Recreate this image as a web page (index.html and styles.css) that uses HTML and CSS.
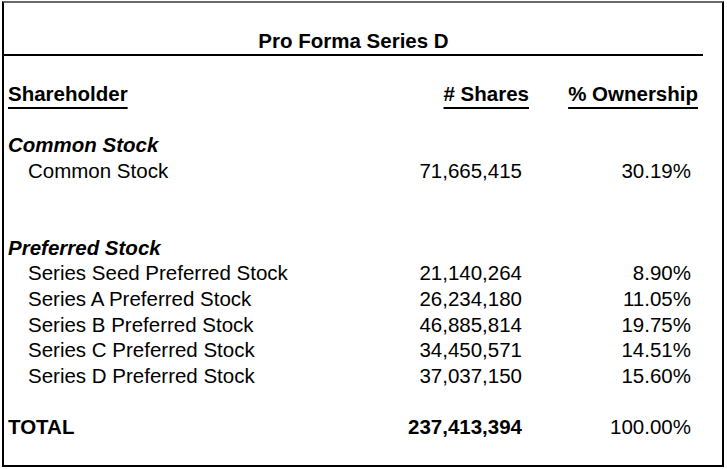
FILE: index.html
```html
<!DOCTYPE html>
<html lang="en">
<head>
<meta charset="utf-8">
<title>Pro Forma Series D</title>
<link rel="stylesheet" href="styles.css">
</head>
<body>
<div class="sheet">
  <div class="row"></div>
  <div class="row"><div class="title">Pro Forma Series D</div></div>
  <div class="row"></div>
  <div class="row head">
    <div class="c-name"><span class="ul">Shareholder</span></div>
    <div class="c-num"><span class="ul"># Shares</span></div>
    <div class="c-pct"><span class="ul">% Ownership</span></div>
  </div>
  <div class="row"></div>
  <div class="row"><div class="c-name group">Common Stock</div></div>
  <div class="row val">
    <div class="c-name sub">Common Stock</div>
    <div class="c-num">71,665,415</div>
    <div class="c-pct">30.19%</div>
  </div>
  <div class="row"></div>
  <div class="row"></div>
  <div class="row"><div class="c-name group">Preferred Stock</div></div>
  <div class="row val">
    <div class="c-name sub">Series Seed Preferred Stock</div>
    <div class="c-num">21,140,264</div>
    <div class="c-pct">8.90%</div>
  </div>
  <div class="row val">
    <div class="c-name sub">Series A Preferred Stock</div>
    <div class="c-num">26,234,180</div>
    <div class="c-pct">11.05%</div>
  </div>
  <div class="row val">
    <div class="c-name sub">Series B Preferred Stock</div>
    <div class="c-num">46,885,814</div>
    <div class="c-pct">19.75%</div>
  </div>
  <div class="row val">
    <div class="c-name sub">Series C Preferred Stock</div>
    <div class="c-num">34,450,571</div>
    <div class="c-pct">14.51%</div>
  </div>
  <div class="row val">
    <div class="c-name sub">Series D Preferred Stock</div>
    <div class="c-num">37,037,150</div>
    <div class="c-pct">15.60%</div>
  </div>
  <div class="row"></div>
  <div class="row val total">
    <div class="c-name strong">TOTAL</div>
    <div class="c-num strong">237,413,394</div>
    <div class="c-pct">100.00%</div>
  </div>
  <div class="row"></div>
</div>
</body>
</html>
```

FILE: styles.css
```css
html, body {
  margin: 0;
  padding: 0;
  background: #ffffff;
}

body {
  font-family: "Liberation Sans", Arial, Helvetica, sans-serif;
  font-size: 20.5px;
  color: #000000;
}

.sheet {
  box-sizing: border-box;
  margin: 1px 0 0 2px;
  width: 722px;
  height: 466px;
  border: 2px solid #000000;
  border-top-color: #6a6a6a;
  display: grid;
  grid-template-rows: repeat(18, 1fr);
}

.row {
  display: grid;
  grid-template-columns: 360px 170px 169px 19px;
  align-items: center;
  line-height: 25.67px;
  white-space: nowrap;
}

.title {
  grid-column: 1 / 4;
  align-self: stretch;
  box-sizing: border-box;
  border-bottom: 2px solid #000000;
  text-align: center;
  font-weight: bold;
}

.c-name {
  grid-column: 1;
  padding-left: 4px;
}

.c-num {
  grid-column: 2;
  text-align: right;
  padding-right: 12px;
}

.c-pct {
  grid-column: 3;
  text-align: right;
  padding-right: 12px;
}

.head {
  font-weight: bold;
}

.head .c-num,
.head .c-pct {
  padding-right: 5px;
}

.ul {
  text-decoration: underline;
  text-decoration-thickness: 2px;
  text-underline-offset: 6px;
}

.group {
  font-weight: bold;
  font-style: italic;
}

.sub {
  padding-left: 24px;
}

.strong {
  font-weight: bold;
}
```
